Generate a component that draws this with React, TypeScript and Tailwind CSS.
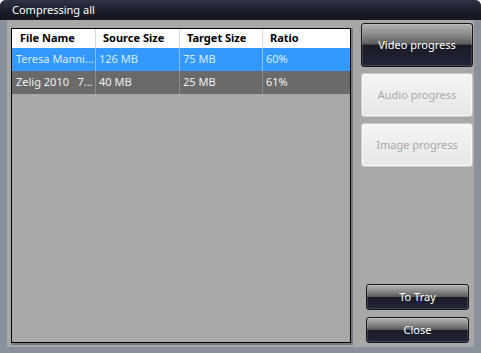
const rows = [
  { name: "Teresa Manni...", source: "126 MB", target: "75 MB", ratio: "60%", selected: true },
  { name: "Zelig 2010   7...", source: "40 MB", target: "25 MB", ratio: "61%", selected: false },
]

function DarkButton({ label, className }: { label: string; className: string }) {
  return (
    <button
      className={
        "relative flex items-center justify-center rounded-[3px] border border-[#15161c] text-white text-[11px] overflow-hidden bg-[linear-gradient(to_bottom,#b4b4b4_0%,#8a8a8a_25%,#5c5c5c_48%,#1a1b24_50%,#22243a_100%)] shadow-[inset_0_0_0_1px_rgba(255,255,255,0.15)] " +
        className
      }
    >
      {label}
    </button>
  )
}

function LightButton({ label }: { label: string }) {
  return (
    <button className="h-[44px] w-full flex items-center justify-center rounded-[3px] border border-[#c8c8c8] bg-[linear-gradient(to_bottom,#f4f4f4,#e6e6e6)] shadow-[inset_0_0_0_1px_#fafafa] text-[#a9a9a9] text-[11px]">
      {label}
    </button>
  )
}

export default function App() {
  return (
    <div className="w-[481px] h-[353px] flex flex-col bg-[#3c4253] rounded-t-[6px] overflow-hidden font-['Noto_Sans',sans-serif]">
      <div className="h-[20px] shrink-0 flex items-center pl-[12px] bg-[linear-gradient(to_bottom,#2e3346,#1a1c27_60%,#151720)] text-white text-[11px]">
        Compressing all
      </div>
      <div className="flex-1 flex flex-col border-x-[7px] border-b-[6px] border-[#8b919b]">
        <div className="flex-1 flex gap-[10px] bg-[#a8a8a8] pl-[4px] pr-[1px] pt-[3px] pb-[4px]">
          <div className="w-[340px] flex flex-col pt-[5px]">
            <div className="flex-1 flex flex-col border border-black shadow-[1px_1px_0_1px_#7a7a76]">
              <div className="flex h-[19px] bg-white text-[11px] font-bold text-black">
                <div className="w-[84px] pl-[8px] border-r border-[#d8d8d8] flex items-center">File Name</div>
                <div className="w-[84px] pl-[7px] border-r border-[#d8d8d8] flex items-center">Source Size</div>
                <div className="w-[83px] pl-[7px] border-r border-[#d8d8d8] flex items-center">Target Size</div>
                <div className="flex-1 pl-[7px] flex items-center">Ratio</div>
              </div>
              {rows.map((r) => (
                <div
                  key={r.name}
                  className={
                    "flex h-[23px] text-[11px] " +
                    (r.selected ? "bg-[#3399fe] text-[#dcecff]" : "bg-[#6a6a6a] text-[#f2f2f2]")
                  }
                >
                  <div className={"w-[84px] pl-[4px] flex items-center whitespace-pre overflow-hidden border-r " + (r.selected ? "border-[#8cc0f2]" : "border-[#8c8c8c]")}>{r.name}</div>
                  <div className={"w-[84px] pl-[3px] flex items-center border-r " + (r.selected ? "border-[#8cc0f2]" : "border-[#8c8c8c]")}>{r.source}</div>
                  <div className={"w-[83px] pl-[3px] flex items-center border-r " + (r.selected ? "border-[#8cc0f2]" : "border-[#8c8c8c]")}>{r.target}</div>
                  <div className="flex-1 pl-[3px] flex items-center">{r.ratio}</div>
                </div>
              ))}
              <div className="flex-1 bg-[#a9a9a9]" />
            </div>
          </div>
          <div className="flex-1 flex flex-col">
            <DarkButton label="Video progress" className="h-[44px] w-full" />
            <div className="mt-[6px]">
              <LightButton label="Audio progress" />
            </div>
            <div className="mt-[6px]">
              <LightButton label="Image progress" />
            </div>
            <div className="flex-1" />
            <div className="flex flex-col items-end gap-[7px] pr-[4px]">
              <DarkButton label="To Tray" className="h-[26px] w-[103px]" />
              <DarkButton label="Close" className="h-[26px] w-[103px]" />
            </div>
          </div>
        </div>
      </div>
    </div>
  )
}
